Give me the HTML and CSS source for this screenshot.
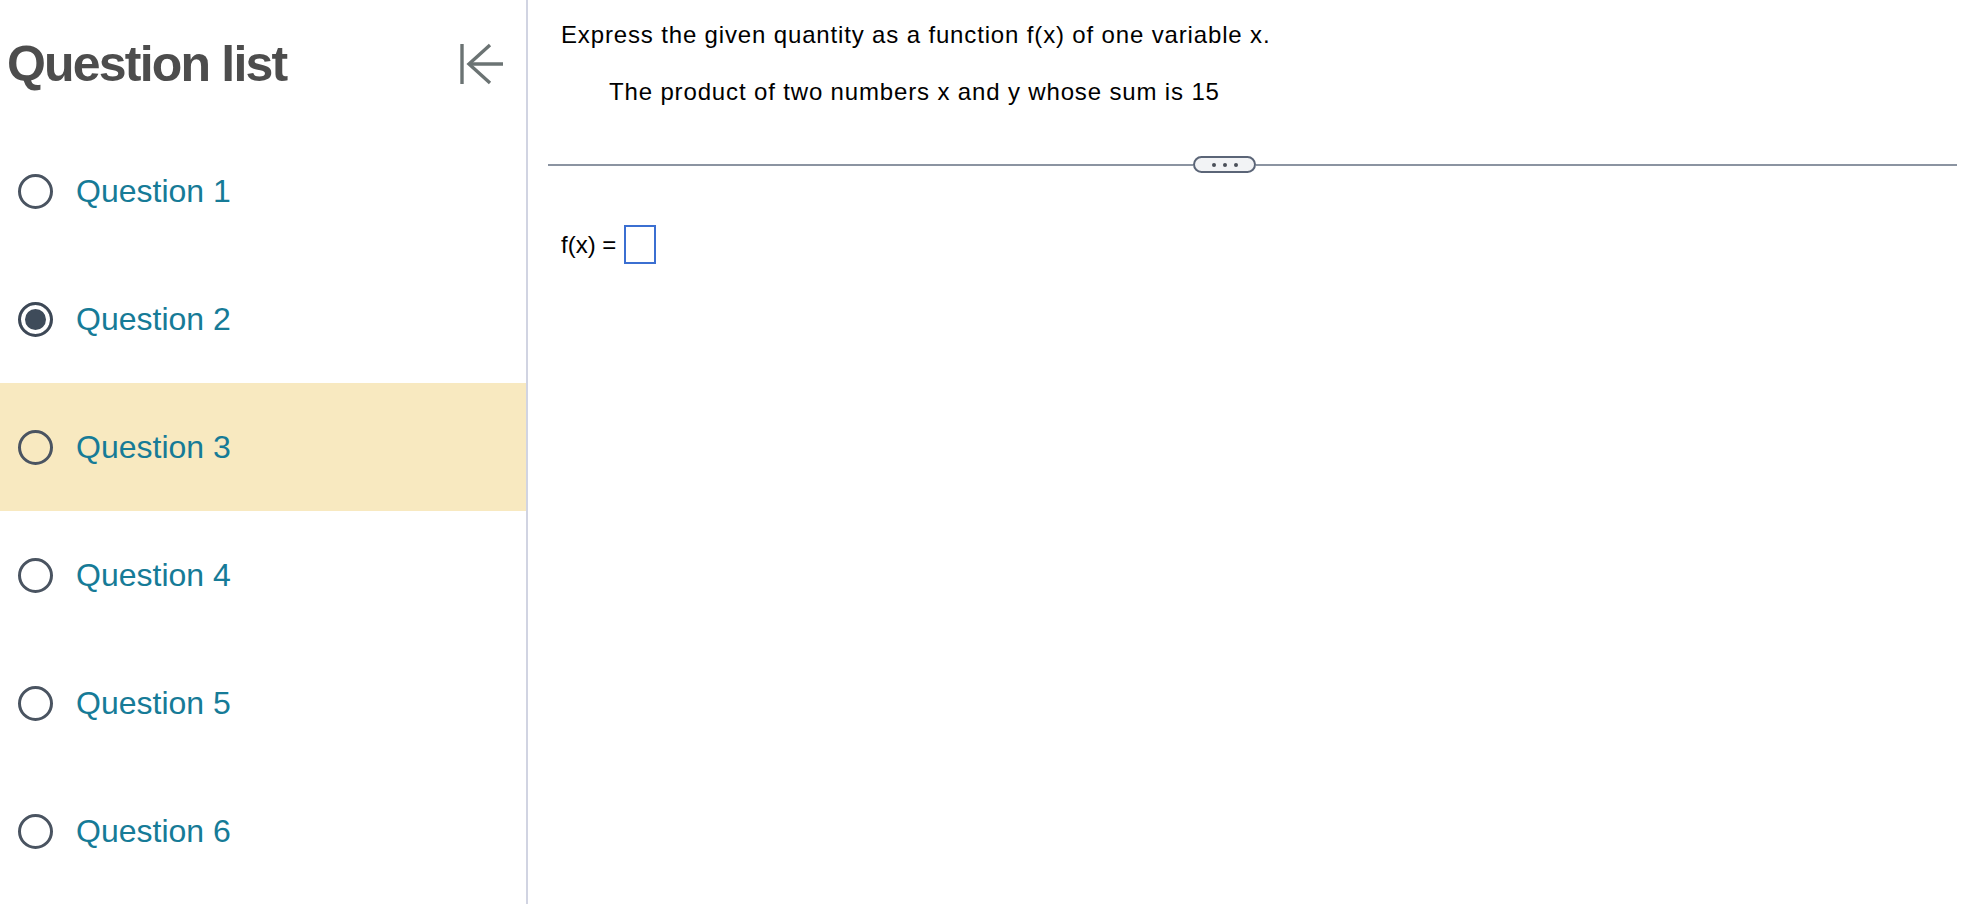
FILE: index.html
```html
<!DOCTYPE html>
<html lang="en">
<head>
  <meta charset="UTF-8" />
  <meta name="viewport" content="width=device-width, initial-scale=1.0"/>
  <title>Question list</title>
  <link rel="stylesheet" href="styles.css">
</head>
<body>

  <div class="page">

    <!-- Daftar soal -->
    <aside class="sidebar">
      <div class="sidebar-head">
        <h2>Question list</h2>
        <button class="collapse-btn" aria-label="Collapse question list">
          <svg width="48" height="44" viewBox="0 0 48 44" fill="none" stroke="#6b7373" stroke-width="3.4">
            <line x1="4" y1="2" x2="4" y2="42" />
            <line x1="11" y1="22" x2="45" y2="22" />
            <polyline points="32,3 11,22 32,41" stroke-linejoin="miter" />
          </svg>
        </button>
      </div>

      <ul class="q-list">
        <li class="q-item"><span class="radio"></span><a href="#">Question 1</a></li>
        <li class="q-item"><span class="radio done"></span><a href="#">Question 2</a></li>
        <li class="q-item active"><span class="radio"></span><a href="#">Question 3</a></li>
        <li class="q-item"><span class="radio"></span><a href="#">Question 4</a></li>
        <li class="q-item"><span class="radio"></span><a href="#">Question 5</a></li>
        <li class="q-item"><span class="radio"></span><a href="#">Question 6</a></li>
      </ul>
    </aside>

    <!-- Soal aktif -->
    <main class="question">
      <p class="prompt">Express the given quantity as a function f(x) of one variable x.</p>
      <p class="given">The product of two numbers x and y whose sum is 15</p>

      <div class="divider">
        <span class="rule"></span>
        <button class="more" aria-label="More"><i></i><i></i><i></i></button>
        <span class="rule"></span>
      </div>

      <div class="answer">
        <span>f(x) =</span>
        <span class="answer-box"></span>
      </div>
    </main>

  </div>

</body>
</html>
```

FILE: styles.css
```css
body {
  margin: 0;
  font-family: 'Liberation Sans', Arial, Helvetica, sans-serif;
  background: #fff;
  color: #000;
}

.page {
  display: flex;
  min-height: 100vh;
}

/* ---- sidebar ---- */

.sidebar {
  flex: 0 0 528px;
  box-sizing: border-box;
  border-right: 2px solid #d1d4e2;
}

.sidebar-head {
  height: 127px;
  display: flex;
  align-items: center;
  justify-content: space-between;
  padding: 0 20px 0 7px;
}

.sidebar-head h2 {
  margin: 0;
  font-size: 50px;
  line-height: 1;
  font-weight: bold;
  letter-spacing: -1.8px;
  color: #4d4d4d;
}

.collapse-btn {
  background: none;
  border: none;
  padding: 0;
  display: flex;
  cursor: pointer;
}

.q-list {
  list-style: none;
  margin: 0;
  padding: 0;
}

.q-item {
  height: 128px;
  display: flex;
  align-items: center;
  gap: 23px;
  padding-left: 18px;
}

.q-item.active {
  background: #f8e9c0;
}

.q-item a {
  font-size: 32px;
  color: #167b97;
  text-decoration: none;
}

.radio {
  width: 35px;
  height: 35px;
  box-sizing: border-box;
  border: 3px solid #4a5461;
  border-radius: 50%;
  filter: blur(0.5px);
}

.radio.done {
  border-color: #3d4856;
  box-shadow: inset 0 0 0 4px #fff, inset 0 0 0 20px #3e4b5a;
}

/* ---- question ---- */

.question {
  flex: 1;
  padding: 20px 5px 0 20px;
}

.prompt,
.given {
  margin: 0;
  font-size: 24px;
  line-height: 30px;
  letter-spacing: 0.85px;
}

.prompt {
  margin-left: 13px;
}

.given {
  margin: 27px 0 0 61px;
}

.divider {
  margin-top: 49px;
  display: grid;
  grid-template-columns: 645px 63px 1fr;
  align-items: center;
}

.rule {
  height: 2px;
  background: #8b94a1;
}

.more {
  height: 17px;
  box-sizing: border-box;
  border: 2px solid #5b6577;
  border-radius: 9px;
  background: #f2f3f5;
  padding: 0;
  display: flex;
  align-items: center;
  justify-content: center;
  gap: 7px;
  cursor: pointer;
}

.more i {
  width: 4px;
  height: 4px;
  border-radius: 50%;
  background: #4b5059;
}

.answer {
  margin: 52px 0 0 13px;
  display: flex;
  align-items: center;
  gap: 8px;
  font-size: 24px;
}

.answer-box {
  width: 32px;
  height: 39px;
  box-sizing: border-box;
  border: 2px solid #3b6fd1;
}
```
